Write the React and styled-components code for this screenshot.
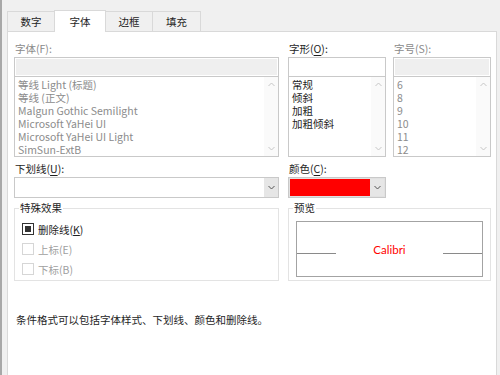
import styled, { createGlobalStyle } from "styled-components";

const GlobalStyle = createGlobalStyle`
  html, body {
    margin: 0;
    padding: 0;
    background: #f0f0f0;
  }
  body {
    font-family: "Noto Sans CJK SC", "Noto Sans", sans-serif;
    font-size: 10.5px;
    color: #1e1e1e;
  }
`;

const Window = styled.div`
  position: relative;
  width: 498px;
  height: 375px;
  overflow: hidden;
  border-left: 2px solid #a8a8a8;
  background: #f0f0f0;
`;

const TabBar = styled.div`
  display: flex;
  align-items: flex-end;
  height: 31px;
  padding-left: 5px;
`;

const Tab = styled.div`
  position: relative;
  box-sizing: border-box;
  width: ${(p) => p.width}px;
  height: ${(p) => (p.active ? 22 : 20)}px;
  margin-left: -1px;
  margin-bottom: ${(p) => (p.active ? -1 : 0)}px;
  z-index: ${(p) => (p.active ? 2 : 0)};
  display: flex;
  align-items: center;
  justify-content: center;
  border: 1px solid #d9d9d9;
  border-bottom: none;
  background: ${(p) => (p.active ? "#fff" : "#f0f0f0")};
  color: #1e1e1e;
  &:first-child {
    margin-left: 0;
  }
`;

const Panel = styled.div`
  position: relative;
  z-index: 1;
  height: 360px;
  margin: 0 3px 0 5px;
  border: 1px solid #d9d9d9;
  background: #fff;
  padding: 8px 0 0 6px;
`;

const FontGrid = styled.div`
  display: grid;
  grid-template-columns: 274px 105px 98px;
  align-items: start;
`;

const Field = styled.div`
  display: flex;
  flex-direction: column;
  width: ${(p) => p.width}px;
  margin-top: ${(p) => p.top || 0}px;
`;

const Label = styled.div`
  height: 17px;
  line-height: 17px;
  padding-left: 1px;
  color: ${(p) => (p.disabled ? "#8a8a8a" : "#1e1e1e")};
  u {
    text-decoration-thickness: 1px;
    text-underline-offset: 2px;
  }
`;

const TextBox = styled.div`
  box-sizing: border-box;
  height: 20px;
  border: 1px solid #c9c9c9;
  background: ${(p) => (p.disabled ? "#efefef" : "#fff")};
  box-shadow: inset 0 0 0 1px #fff;
`;

const ListBox = styled.div`
  box-sizing: border-box;
  height: 81px;
  margin-top: -1px;
  border: 1px solid #c9c9c9;
  display: flex;
  background: #fff;
`;

const Items = styled.div`
  flex: 1;
  padding: 1px 0 0 3px;
  overflow: hidden;
`;

const Item = styled.div`
  height: 13px;
  line-height: 13px;
  white-space: nowrap;
  color: ${(p) => (p.disabled ? "#8c8c8c" : "#1e1e1e")};
`;

const ScrollBar = styled.div`
  width: 14px;
  display: flex;
  flex-direction: column;
  justify-content: space-between;
  align-items: center;
  padding: 5px 0;
  background: #fafafa;
`;

const Chevron = ({ up, color = "#c6c6c6" }) => (
  <svg width="7" height="5" viewBox="0 0 7 5">
    <path
      d={up ? "M0.5 4 L3.5 1 L6.5 4" : "M0.5 1 L3.5 4 L6.5 1"}
      fill="none"
      stroke={color}
      strokeWidth="1"
    />
  </svg>
);

const Select = styled.div`
  box-sizing: border-box;
  height: 21px;
  border: 1px solid #c9c9c9;
  display: flex;
  padding: ${(p) => (p.swatch ? "1px" : "0")};
  background: ${(p) => (p.swatch ? "#e1e1e1" : "#fff")};
`;

const SelectValue = styled.div`
  flex: 1;
  background: ${(p) => p.color || "#fff"};
`;

const DropButton = styled.div`
  width: 14px;
  display: flex;
  align-items: center;
  justify-content: center;
  background: #e6e6e6;
`;

const Group = styled.fieldset`
  box-sizing: border-box;
  width: ${(p) => p.width}px;
  height: 81px;
  margin: 2px 0 0;
  padding: 0;
  border: 1px solid #e3e3e3;
  min-width: 0;
  grid-column: ${(p) => p.span || "auto"};
`;

const Legend = styled.legend`
  margin-left: 4px;
  padding: 0 1px;
  line-height: 16px;
  color: #1e1e1e;
`;

const CheckRow = styled.div`
  display: flex;
  align-items: center;
  gap: 4px;
  height: 20px;
  padding-left: 7px;
  color: ${(p) => (p.disabled ? "#a0a0a0" : "#1e1e1e")};
  &:first-of-type {
    margin-top: 3px;
  }
`;

const Box = styled.span`
  box-sizing: border-box;
  width: 12px;
  height: 12px;
  border: 1px solid ${(p) => (p.disabled ? "#d6d6d6" : "#333")};
  display: flex;
  align-items: center;
  justify-content: center;
  &::after {
    content: "";
    width: 6px;
    height: 6px;
    background: ${(p) => (p.checked ? "#333" : "transparent")};
  }
`;

const PreviewBox = styled.div`
  box-sizing: border-box;
  height: 56px;
  margin: 5px 7px 0 7px;
  border: 1px solid #a3a3a3;
  display: flex;
  align-items: center;
`;

const Rule = styled.div`
  width: 39px;
  height: 1px;
  margin-top: 8px;
  background: #8a8a8a;
`;

const Sample = styled.div`
  flex: 1;
  text-align: center;
  font-family: Lato, "Liberation Sans", sans-serif;
  font-size: 11.5px;
  color: #ff0000;
`;

const Note = styled.div`
  margin-top: 31px;
  padding-left: 2px;
`;

const Watermark = styled.div`
  position: absolute;
  right: 28px;
  bottom: 12px;
  display: flex;
  flex-direction: column;
  align-items: center;
  font-family: "Liberation Sans", "Noto Sans CJK SC", sans-serif;
  color: #fff;
  -webkit-text-stroke: 1px #e9e9e9;
  pointer-events: none;
`;

const MarkTitle = styled.div`
  font-size: 24px;
  font-weight: bold;
  line-height: 26px;
`;

const MarkSub = styled.div`
  font-size: 10px;
  -webkit-text-stroke: 0.5px #e6e6e6;
`;

const fontNames = [
  "等线 Light (标题)",
  "等线 (正文)",
  "Malgun Gothic Semilight",
  "Microsoft YaHei UI",
  "Microsoft YaHei UI Light",
  "SimSun-ExtB",
];
const styles = ["常规", "倾斜", "加粗", "加粗倾斜"];
const sizes = ["6", "8", "9", "10", "11", "12"];

function List({ items, disabled }) {
  return (
    <ListBox>
      <Items>
        {items.map((t) => (
          <Item key={t} disabled={disabled}>
            {t}
          </Item>
        ))}
      </Items>
      <ScrollBar>
        <Chevron up />
        <Chevron />
      </ScrollBar>
    </ListBox>
  );
}

export default function App() {
  return (
    <>
      <GlobalStyle />
      <Window>
        <TabBar>
          <Tab width={48}>数字</Tab>
          <Tab width={52} active>
            字体
          </Tab>
          <Tab width={48}>边框</Tab>
          <Tab width={49}>填充</Tab>
        </TabBar>
        <Panel>
          <FontGrid>
            <Field width={265}>
              <Label disabled>字体(F):</Label>
              <TextBox disabled />
              <List items={fontNames} disabled />
            </Field>
            <Field width={98}>
              <Label>
                字形(<u>O</u>):
              </Label>
              <TextBox />
              <List items={styles} />
            </Field>
            <Field width={98}>
              <Label disabled>字号(S):</Label>
              <TextBox disabled />
              <List items={sizes} disabled />
            </Field>

            <Field width={265} top={3}>
              <Label>
                下划线(<u>U</u>):
              </Label>
              <Select>
                <SelectValue />
                <DropButton>
                  <Chevron color="#555" />
                </DropButton>
              </Select>
            </Field>
            <Field width={98} top={3}>
              <Label>
                颜色(<u>C</u>):
              </Label>
              <Select swatch>
                <SelectValue color="#ff0000" />
                <DropButton>
                  <Chevron color="#555" />
                </DropButton>
              </Select>
            </Field>
            <div />

            <Group width={265}>
              <Legend>特殊效果</Legend>
              <CheckRow>
                <Box checked />
                <span>
                  删除线(<u>K</u>)
                </span>
              </CheckRow>
              <CheckRow disabled>
                <Box disabled />
                <span>上标(E)</span>
              </CheckRow>
              <CheckRow disabled>
                <Box disabled />
                <span>下标(B)</span>
              </CheckRow>
            </Group>
            <Group width={203} span="2 / 4">
              <Legend>预览</Legend>
              <PreviewBox>
                <Rule />
                <Sample>Calibri</Sample>
                <Rule />
              </PreviewBox>
            </Group>
          </FontGrid>
          <Note>条件格式可以包括字体样式、下划线、颜色和删除线。</Note>
        </Panel>
        <Watermark>
          <MarkTitle>Baidu经验</MarkTitle>
          <MarkSub>jingyan.baidu.com</MarkSub>
        </Watermark>
      </Window>
    </>
  );
}
